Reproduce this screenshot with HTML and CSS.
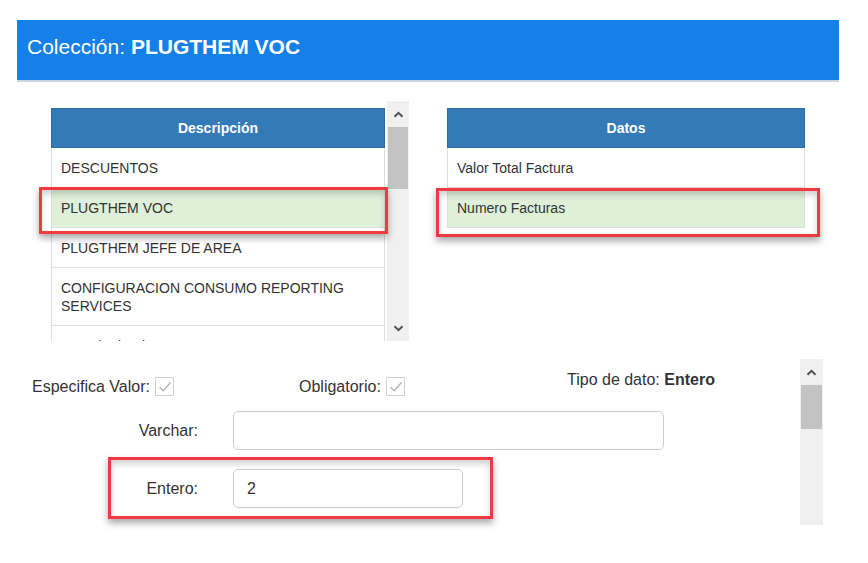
FILE: index.html
```html
<!DOCTYPE html>
<html lang="es">
<head>
<meta charset="utf-8">
<title>Colección</title>
<link rel="stylesheet" href="styles.css">
</head>
<body>
<div class="page">
  <div class="titlebar">Colección: <b>PLUGTHEM VOC</b></div>

  <div class="lists">
    <div class="list-left">
      <div class="clip">
        <div class="tablebox">
          <table class="grid grid-left">
            <thead><tr><th>Descripción</th></tr></thead>
            <tbody>
              <tr><td>DESCUENTOS</td></tr>
              <tr class="sel"><td>PLUGTHEM VOC</td></tr>
              <tr><td>PLUGTHEM JEFE DE AREA</td></tr>
              <tr><td>CONFIGURACION CONSUMO REPORTING SERVICES</td></tr>
              <tr><td>Usuario de Sistema</td></tr>
            </tbody>
          </table>
        </div>
        <div class="mark mark-left"></div>
      </div>
      <div class="vscroll vscroll-left">
        <div class="arrow"><svg width="11" height="7" viewBox="0 0 11 7"><path d="M1.5 5.8 L5.5 1.8 L9.5 5.8" fill="none" stroke="#505050" stroke-width="2"/></svg></div>
        <div class="thumb thumb-left"></div>
        <div class="spacer"></div>
        <div class="arrow"><svg width="11" height="7" viewBox="0 0 11 7"><path d="M1.5 1.2 L5.5 5.2 L9.5 1.2" fill="none" stroke="#505050" stroke-width="2"/></svg></div>
      </div>
    </div>

    <div class="list-right">
      <table class="grid grid-right">
        <thead><tr><th>Datos</th></tr></thead>
        <tbody>
          <tr><td>Valor Total Factura</td></tr>
          <tr class="sel"><td>Numero Facturas</td></tr>
        </tbody>
      </table>
      <div class="mark mark-right"></div>
    </div>
  </div>

  <div class="formwrap">
    <div class="form">
      <div class="row row-checks">
        <div class="chk chk-1">Especifica Valor:
          <span class="box"><svg width="18" height="18" viewBox="0 0 18 18"><path d="M3.5 9.2 L7.2 12.8 L14.5 4.5" fill="none" stroke="#b5b5b5" stroke-width="1.4"/></svg></span>
        </div>
        <div class="chk chk-2">Obligatorio:
          <span class="box"><svg width="18" height="18" viewBox="0 0 18 18"><path d="M3.5 9.2 L7.2 12.8 L14.5 4.5" fill="none" stroke="#b5b5b5" stroke-width="1.4"/></svg></span>
        </div>
        <div class="tipo">Tipo de dato: <b>Entero</b></div>
      </div>
      <div class="row row-field">
        <label class="lbl">Varchar:</label>
        <div class="input input-wide"></div>
      </div>
      <div class="row row-field row-entero">
        <label class="lbl">Entero:</label>
        <div class="input input-short">2</div>
        <div class="mark mark-entero"></div>
      </div>
    </div>
    <div class="vscroll vscroll-form">
      <div class="arrow"><svg width="11" height="7" viewBox="0 0 11 7"><path d="M1.5 5.8 L5.5 1.8 L9.5 5.8" fill="none" stroke="#505050" stroke-width="2"/></svg></div>
      <div class="thumb thumb-form"></div>
      <div class="spacer"></div>
    </div>
  </div>
</div>
</body>
</html>
```

FILE: styles.css
```css
* { box-sizing: border-box; }

html, body {
  margin: 0;
  padding: 0;
  background: #ffffff;
}

body {
  font-family: "Liberation Sans", Arial, sans-serif;
  color: #333333;
}

.page {
  width: 868px;
  height: 563px;
  padding: 20px 0 0 17px;
  overflow: hidden;
}

.titlebar {
  width: 822px;
  height: 62px;
  background: #1580e8;
  border-bottom: 2px solid #c8d6e4;
  color: #ffffff;
  font-size: 21px;
  line-height: 21px;
  padding: 16px 0 0 10px;
}

.titlebar b { font-weight: bold; }

.lists {
  display: flex;
  align-items: flex-start;
  margin-top: 19px;
  padding-left: 34px;
}

.list-left {
  display: flex;
  height: 240px;
}

.clip {
  position: relative;
  width: 334px;
  height: 240px;
}

.tablebox {
  height: 240px;
  padding-top: 7px;
  overflow: hidden;
}

.grid {
  border-collapse: collapse;
  font-size: 14px;
  line-height: 18px;
}

.grid-left { width: 334px; }

.grid th {
  background: #337ab7;
  color: #ffffff;
  font-weight: bold;
  text-align: center;
  padding: 10px 9px;
  border: 1px solid #2e6da4;
}

.grid td {
  padding: 11px 9px 10px;
  border: 1px solid #dddddd;
  background: #ffffff;
  text-align: left;
}

.grid tr.sel td { background: #dff0d8; }

.vscroll {
  display: flex;
  flex-direction: column;
  background: #f0f0f0;
}

.vscroll-left {
  width: 22px;
  height: 240px;
  margin-left: 2px;
}

.arrow {
  height: 26px;
  display: flex;
  align-items: center;
  justify-content: center;
}

.thumb {
  background: #c3c3c3;
  margin: 0 1px;
}

.thumb-left { height: 62px; }

.spacer { flex: 1; }

.list-right {
  position: relative;
  margin-left: 38px;
  padding-top: 7px;
}

.grid-right { width: 358px; }

.mark {
  position: absolute;
  border: 3px solid #f03a40;
  box-shadow: 0 4px 7px rgba(0, 0, 0, 0.35), inset 0 4px 6px rgba(0, 0, 0, 0.18);
  pointer-events: none;
}

.mark-left {
  left: -12px;
  top: 86px;
  width: 349px;
  height: 47px;
}

.mark-right {
  left: -11px;
  top: 87px;
  width: 384px;
  height: 49px;
}

.formwrap {
  display: flex;
  margin-top: 18px;
}

.form {
  width: 783px;
  height: 166px;
}

.row {
  display: flex;
  align-items: center;
  font-size: 16px;
}

.row-checks {
  align-items: flex-start;
  padding-top: 12px;
  height: 36px;
}

.chk {
  display: flex;
  align-items: flex-end;
  margin-top: 6px;
  line-height: 19px;
}

.chk-1 { margin-left: 15px; width: 267px; }
.chk-2 { width: 268px; }

.box {
  display: inline-block;
  width: 19px;
  height: 19px;
  border: 1px solid #cfcfcf;
  background: #ffffff;
  margin-left: 5px;
  border-radius: 1px;
}

.box svg { display: block; }

.tipo {
  font-size: 16px;
  line-height: 18px;
}

.row-field {
  position: relative;
  margin-top: 16px;
}

.row-entero { margin-top: 19px; }

.lbl {
  width: 181px;
  text-align: right;
  font-size: 16px;
}

.input {
  margin-left: 35px;
  height: 39px;
  border: 1px solid #cccccc;
  border-radius: 5px;
  background: #ffffff;
  font-size: 16px;
  line-height: 37px;
  padding-left: 13px;
}

.input-wide { width: 431px; }
.input-short { width: 230px; }

.mark-entero {
  left: 91px;
  top: -12px;
  width: 385px;
  height: 62px;
}

.vscroll-form {
  width: 23px;
  height: 166px;
}

.thumb-form { height: 44px; }
```
